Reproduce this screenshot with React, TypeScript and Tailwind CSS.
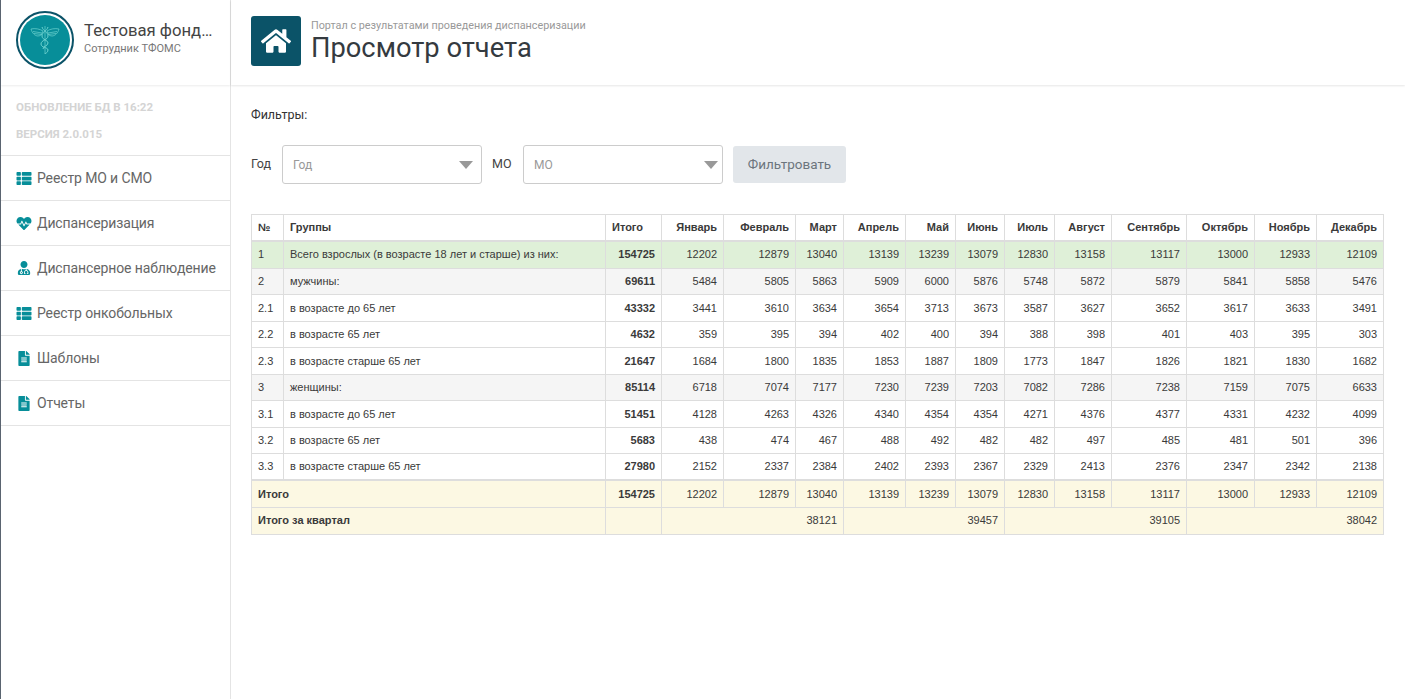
import { FaHeartbeat, FaThList, FaFileAlt, FaUserMd, FaHome } from 'react-icons/fa';

const months = ['Январь', 'Февраль', 'Март', 'Апрель', 'Май', 'Июнь', 'Июль', 'Август', 'Сентябрь', 'Октябрь', 'Ноябрь', 'Декабрь'];
const widths = [32, 322, 56, 62, 72, 48, 62, 50, 49, 50, 57, 75, 68, 62, 67];

const rows = [
  { n: '1', name: 'Всего взрослых (в возрасте 18 лет и старше) из них:', total: 154725, v: [12202, 12879, 13040, 13139, 13239, 13079, 12830, 13158, 13117, 13000, 12933, 12109], bg: 'h-[27.500px] bg-[#dff0d8]' },
  { n: '2', name: 'мужчины:', total: 69611, v: [5484, 5805, 5863, 5909, 6000, 5876, 5748, 5872, 5879, 5841, 5858, 5476], bg: 'h-[26.500px] bg-[#f5f5f5]' },
  { n: '2.1', name: 'в возрасте до 65 лет', total: 43332, v: [3441, 3610, 3634, 3654, 3713, 3673, 3587, 3627, 3652, 3617, 3633, 3491], bg: 'h-[26.500px]' },
  { n: '2.2', name: 'в возрасте 65 лет', total: 4632, v: [359, 395, 394, 402, 400, 394, 388, 398, 401, 403, 395, 303], bg: 'h-[26.500px]' },
  { n: '2.3', name: 'в возрасте старше 65 лет', total: 21647, v: [1684, 1800, 1835, 1853, 1887, 1809, 1773, 1847, 1826, 1821, 1830, 1682], bg: 'h-[26.500px]' },
  { n: '3', name: 'женщины:', total: 85114, v: [6718, 7074, 7177, 7230, 7239, 7203, 7082, 7286, 7238, 7159, 7075, 6633], bg: 'h-[26.500px] bg-[#f5f5f5]' },
  { n: '3.1', name: 'в возрасте до 65 лет', total: 51451, v: [4128, 4263, 4326, 4340, 4354, 4354, 4271, 4376, 4377, 4331, 4232, 4099], bg: 'h-[26.500px]' },
  { n: '3.2', name: 'в возрасте 65 лет', total: 5683, v: [438, 474, 467, 488, 492, 482, 482, 497, 485, 481, 501, 396], bg: 'h-[26.500px]' },
  { n: '3.3', name: 'в возрасте старше 65 лет', total: 27980, v: [2152, 2337, 2384, 2402, 2393, 2367, 2329, 2413, 2376, 2347, 2342, 2138], bg: 'h-[26.500px]' },
];
const totals = [12202, 12879, 13040, 13139, 13239, 13079, 12830, 13158, 13117, 13000, 12933, 12109];

const menu = [
  { label: 'Реестр МО и СМО', icon: FaThList, size: 'h-[15px] w-[16px]' },
  { label: 'Диспансеризация', icon: FaHeartbeat, size: 'h-[15px] w-[16px]' },
  { label: 'Диспансерное наблюдение', icon: FaUserMd, size: 'h-[14px] w-[16px]' },
  { label: 'Реестр онкобольных', icon: FaThList, size: 'h-[15px] w-[16px]' },
  { label: 'Шаблоны', icon: FaFileAlt, size: 'h-[15px] w-[16px]' },
  { label: 'Отчеты', icon: FaFileAlt, size: 'h-[15px] w-[16px]' },
];

const td = 'border border-[#dddddd] px-[6px] py-0 align-middle';

function Logo() {
  return (
    <div className="flex h-[58px] w-[58px] shrink-0 items-center justify-center rounded-full border-2 border-[#0b5368] bg-white">
      <div className="flex h-[50px] w-[50px] items-center justify-center rounded-full bg-[#078e99]">
        <svg width="30" height="30" viewBox="0 0 30 30" fill="none" stroke="#6fd3d0" strokeWidth="0.7">
          <path d="M1 4c4-1 9 0 12 2-1 3-2 5-5 5S2 8 1 4zM29 4c-4-1-9 0-12 2 1 3 2 5 5 5s6-3 7-7z" />
          <path d="M3 6.500l9 1.500M4 8.500l8 1M27 6.500l-9 1.500M26 8.500l-8 1" />
          <path d="M15 1v28" />
          <path d="M12 2c1 4 6 5 6 9s-7 4-7 8 7 3 7 6-3 3-3 4" strokeWidth="1" />
          <path d="M18 2c-1 4-6 5-6 9s6 4 6 7-5 3-5 6" strokeWidth="1" />
        </svg>
      </div>
    </div>
  );
}

export default function App() {
  return (
    <div className="flex h-[699px] w-[1405px] overflow-hidden border-l border-[#5a6470] bg-white font-['Roboto',sans-serif] text-[14px] text-[#333]">
      <aside className="w-[230px] shrink-0 border-r border-[#e4e4e4]">
        <div className="flex h-[85px] items-start gap-[10px] pl-[15px] pt-[11px] shadow-[0_1px_2px_rgba(0,0,0,0.08)]">
          <Logo />
          <div className="mt-[9px] min-w-0">
            <div className="whitespace-nowrap text-[16.700px] leading-[22px] text-[#444]">Тестовая фонд…</div>
            <div className="text-[11px] leading-[14px] text-[#777]">Сотрудник ТФОМС</div>
          </div>
        </div>
        <div className="flex h-[70px] flex-col gap-[13px] pl-[15px] pt-[15px] text-[11.500px] font-bold leading-[14px] text-[#d4d4d4]">
          <div>ОБНОВЛЕНИЕ БД В 16:22</div>
          <div>ВЕРСИЯ 2.0.015</div>
        </div>
        <nav className="border-t border-[#e4e4e4]">
          {menu.map((m) => (
            <div key={m.label} className="flex h-[45px] items-center gap-[5px] border-b border-[#e4e4e4] pl-[15px] tracking-[-0.12px] text-[#666]">
              <m.icon className={`${m.size} text-[#078e99]`} />
              <span>{m.label}</span>
            </div>
          ))}
        </nav>
      </aside>

      <main className="min-w-0 flex-1">
        <header className="flex h-[85px] items-start gap-[10px] pl-[20px] pt-[16px] shadow-[0_1px_2px_rgba(0,0,0,0.1)]">
          <div className="flex h-[50px] w-[50px] items-center justify-center rounded-[3px] bg-[#0b5368]">
            <FaHome className="h-[30px] w-[30px] text-white" />
          </div>
          <div className="mt-[3px]">
            <div className="text-[10.800px] leading-[13px] text-[#999]">Портал с результатами проведения диспансеризации</div>
            <h1 className="text-[27.300px] leading-[32px] text-[#343a40]">Просмотр отчета</h1>
          </div>
        </header>

        <div className="pl-[20px] pt-[21px]">
          <div className="text-[12.500px] leading-[18px]">Фильтры:</div>
          <div className="mt-[21px] flex items-center text-[12.500px] text-[#444]">
            <span className="mr-[10px] w-[21px]">Год</span>
            <div className="relative flex h-[39px] w-[200px] items-center rounded-[3px] border border-[#ccc] pl-[10px] text-[12px] text-[#999]">
              Год
              <span className="absolute right-[8px] top-[15px] h-0 w-0 border-x-[7px] border-t-[8px] border-x-transparent border-t-[#999]" />
            </div>
            <span className="mx-[10px] w-[21px]">МО</span>
            <div className="relative flex h-[39px] w-[200px] items-center rounded-[3px] border border-[#ccc] pl-[10px] text-[12px] text-[#999]">
              МО
              <span className="absolute right-[4px] top-[15px] h-0 w-0 border-x-[7px] border-t-[8px] border-x-transparent border-t-[#999]" />
            </div>
            <button className="ml-[10px] h-[37px] w-[113px] rounded-[3px] bg-[#e2e6ea] text-[13.500px] text-[#6c757d]">Фильтровать</button>
          </div>

          <table className="mt-[30px] w-[1132px] table-fixed border-collapse font-['Liberation_Sans',sans-serif] text-[11px] text-[#3a3a3a]">
            <colgroup>
              {widths.map((w, i) => (
                <col key={i} span={1} width={w} />
              ))}
            </colgroup>
            <thead>
              <tr className="h-[26px]">
                <th className={`${td} border-b-2 text-left`}>№</th>
                <th className={`${td} border-b-2 text-left`}>Группы</th>
                <th className={`${td} border-b-2 text-left`}>Итого</th>
                {months.map((m) => (
                  <th key={m} className={`${td} border-b-2 text-right`}>{m}</th>
                ))}
              </tr>
            </thead>
            <tbody>
              {rows.map((r) => (
                <tr key={r.n} className={r.bg}>
                  <td className={td}>{r.n}</td>
                  <td className={td}>{r.name}</td>
                  <td className={`${td} text-right font-bold`}>{r.total}</td>
                  {r.v.map((x, i) => (
                    <td key={i} className={`${td} text-right`}>{x}</td>
                  ))}
                </tr>
              ))}
            </tbody>
            <tfoot className="bg-[#fcf8e3]">
              <tr className="h-[27px] border-t-2 border-[#dddddd]">
                <td colSpan={2} className={`${td} font-bold`}>Итого</td>
                <td className={`${td} text-right font-bold`}>154725</td>
                {totals.map((x, i) => (
                  <td key={i} className={`${td} text-right`}>{x}</td>
                ))}
              </tr>
              <tr className="h-[27px]">
                <td colSpan={2} className={`${td} font-bold`}>Итого за квартал</td>
                <td className={td} />
                <td colSpan={3} className={`${td} text-right`}>38121</td>
                <td colSpan={3} className={`${td} text-right`}>39457</td>
                <td colSpan={3} className={`${td} text-right`}>39105</td>
                <td colSpan={3} className={`${td} text-right`}>38042</td>
              </tr>
            </tfoot>
          </table>
        </div>
      </main>
    </div>
  );
}
